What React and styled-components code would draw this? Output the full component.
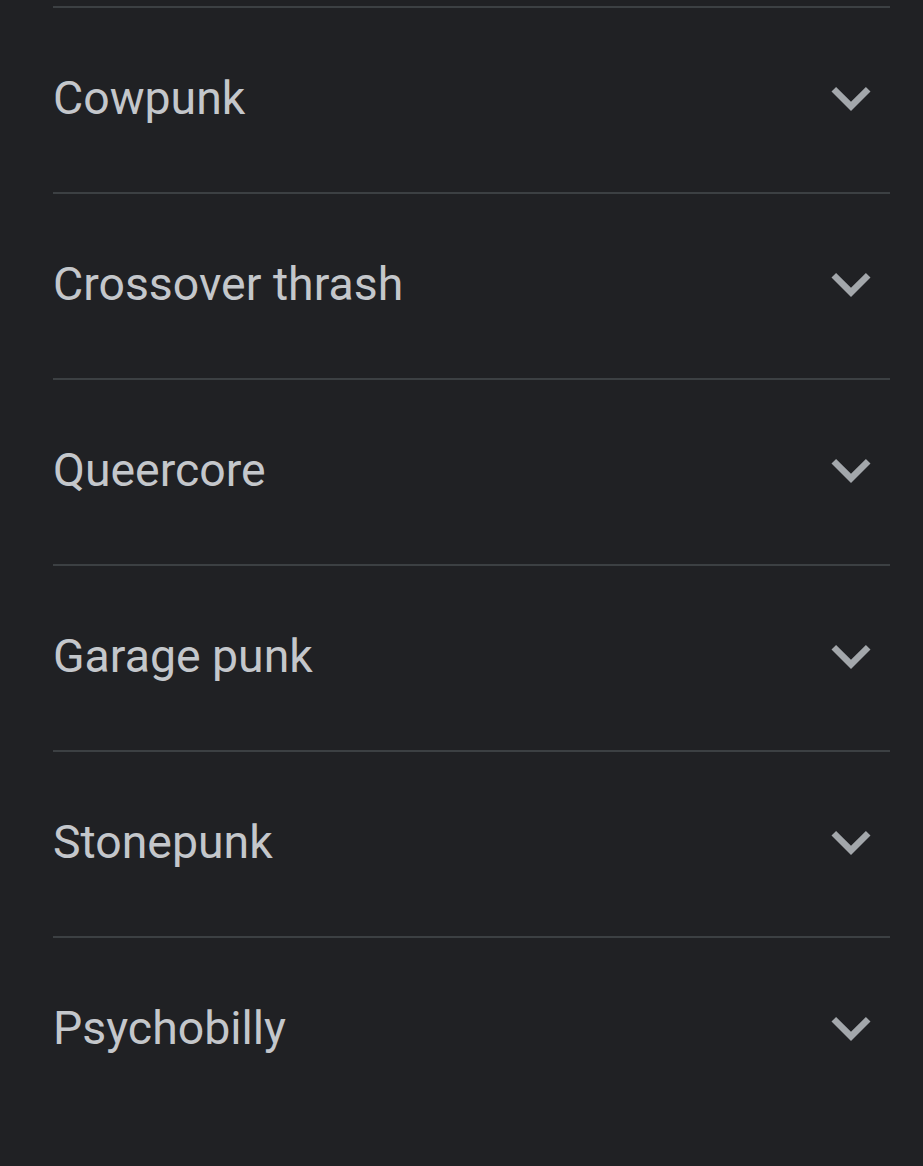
import React from "react";
import styled, { createGlobalStyle } from "styled-components";

const Global = createGlobalStyle`
  html, body { margin: 0; padding: 0; background: #202124; }
  body { font-family: Roboto, "Noto Sans", sans-serif; }
`;

const List = styled.div`
  padding: 6px 33px 0 53px;
  min-height: 1166px;
  box-sizing: border-box;
  background: #202124;
`;

const Item = styled.div`
  display: flex;
  align-items: center;
  justify-content: space-between;
  height: 184px;
  border-top: 2px solid #3c4043;
`;

const Label = styled.span`
  font-size: 46.4px;
  color: #c4c7cb;
  margin-top: -4px;
`;

const Chevron = styled.svg`
  width: 78px;
  height: 78px;
  fill: #a3a7ab;
  margin-top: -4px;
`;

const items = ["Cowpunk", "Crossover thrash", "Queercore", "Garage punk", "Stonepunk", "Psychobilly"];

export default function App() {
  return (
    <>
      <Global />
      <List>
        {items.map((t) => (
          <Item key={t}>
            <Label>{t}</Label>
            <Chevron viewBox="0 0 24 24">
              <path d="M16.59 8.59L12 13.17 7.41 8.59 6 10l6 6 6-6z" />
            </Chevron>
          </Item>
        ))}
      </List>
    </>
  );
}
